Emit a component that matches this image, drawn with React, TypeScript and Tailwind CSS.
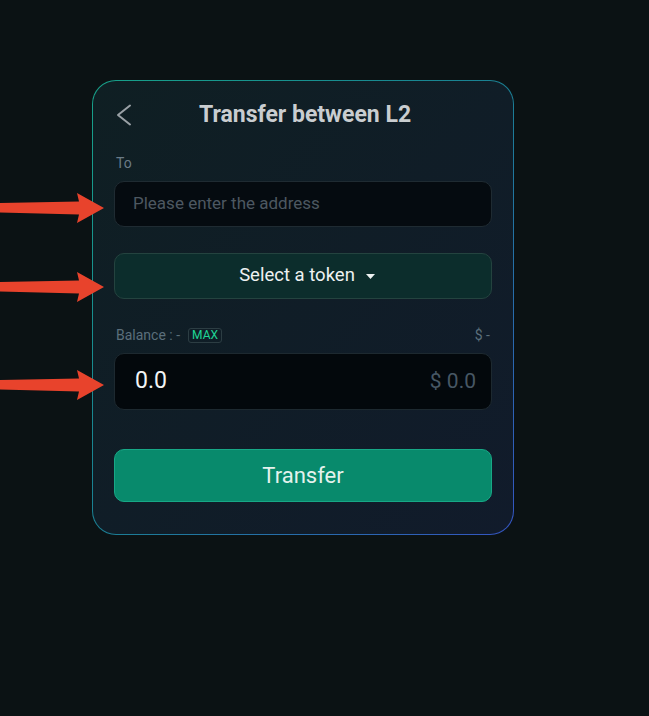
import React from "react";

function Arrow({ top }: { top: number }) {
  return (
    <svg
      className="absolute left-0"
      style={{ top }}
      width="106"
      height="32"
      viewBox="0 0 106 32"
    >
      <polygon
        points="0,11 79,9.5 77,1 104,16 77,31 79,22.5 0,20.5"
        fill="#e8432c"
      />
    </svg>
  );
}

function App() {
  return (
    <div
      className="relative min-h-[716px] w-full bg-[#0b1214] pl-[92px] pt-[80px]"
      style={{ fontFamily: "Roboto, 'Noto Sans', sans-serif" }}
    >
      <div className="w-[422px] rounded-[24px] bg-linear-to-br from-[#17a189] via-[#1a7f93] to-[#3454c2] p-px">
        <div className="flex flex-col rounded-[23px] bg-linear-to-br from-[#0f1f23] to-[#111b2b] px-[21px] pb-[32px] pt-[16px]">
          <div className="relative flex h-[36px] items-center justify-center">
            <svg
              className="absolute left-[1px] top-[7px]"
              width="18"
              height="22"
              viewBox="0 0 18 22"
              fill="none"
            >
              <polyline
                points="15,1.5 3,11 15,20.5"
                stroke="#9aa1a6"
                strokeWidth="2"
                strokeLinecap="round"
                strokeLinejoin="round"
              />
            </svg>
            <h1 className="pl-[4px] text-[23px] font-bold text-[#c9cdd0]">
              Transfer between L2
            </h1>
          </div>

          <div className="mt-[22px] pl-[2px] text-[14px] leading-[16px] text-[#6a7b87]">
            To
          </div>
          <div className="mt-[10px] flex h-[46px] items-center rounded-[10px] border border-[#1f2b32] bg-[#050b10] px-[18px]">
            <span className="text-[17px] text-[#4d5861]">
              Please enter the address
            </span>
          </div>

          <button className="mt-[26px] flex h-[46px] items-center justify-center gap-[11px] rounded-[10px] border border-[#24433f] bg-[#0c2d2c] pl-[8px] text-[18.5px] text-[#eef2f2]">
            <span>Select a token</span>
            <svg width="9" height="5" viewBox="0 0 9 5">
              <polygon points="0,0 9,0 4.5,5" fill="#eef2f2" />
            </svg>
          </button>

          <div className="mt-[28px] flex h-[16px] items-center justify-between px-[2px] text-[14px] leading-[16px] text-[#5b6f7b]">
            <div className="flex items-center gap-[8px]">
              <span>Balance : -</span>
              <span className="rounded-[3px] border border-[#2c3d43] px-[3px] text-[12px] leading-[13px] text-[#1fd595]">
                MAX
              </span>
            </div>
            <span>$ -</span>
          </div>

          <div className="mt-[10px] flex h-[57px] items-center justify-between rounded-[10px] border border-[#1d2930] bg-[#03080c] pl-[20px] pr-[15px]">
            <span className="text-[23px] text-[#f2f4f5]">0.0</span>
            <span className="text-[21px] text-[#475764]">$ 0.0</span>
          </div>

          <button className="mt-[39px] flex h-[53px] items-center justify-center rounded-[10px] border border-[#17a886] bg-[#088a6c] text-[22px] text-[#e4f2ed]">
            Transfer
          </button>
        </div>
      </div>

      <Arrow top={192} />
      <Arrow top={271} />
      <Arrow top={369} />
    </div>
  );
}

export default App;
